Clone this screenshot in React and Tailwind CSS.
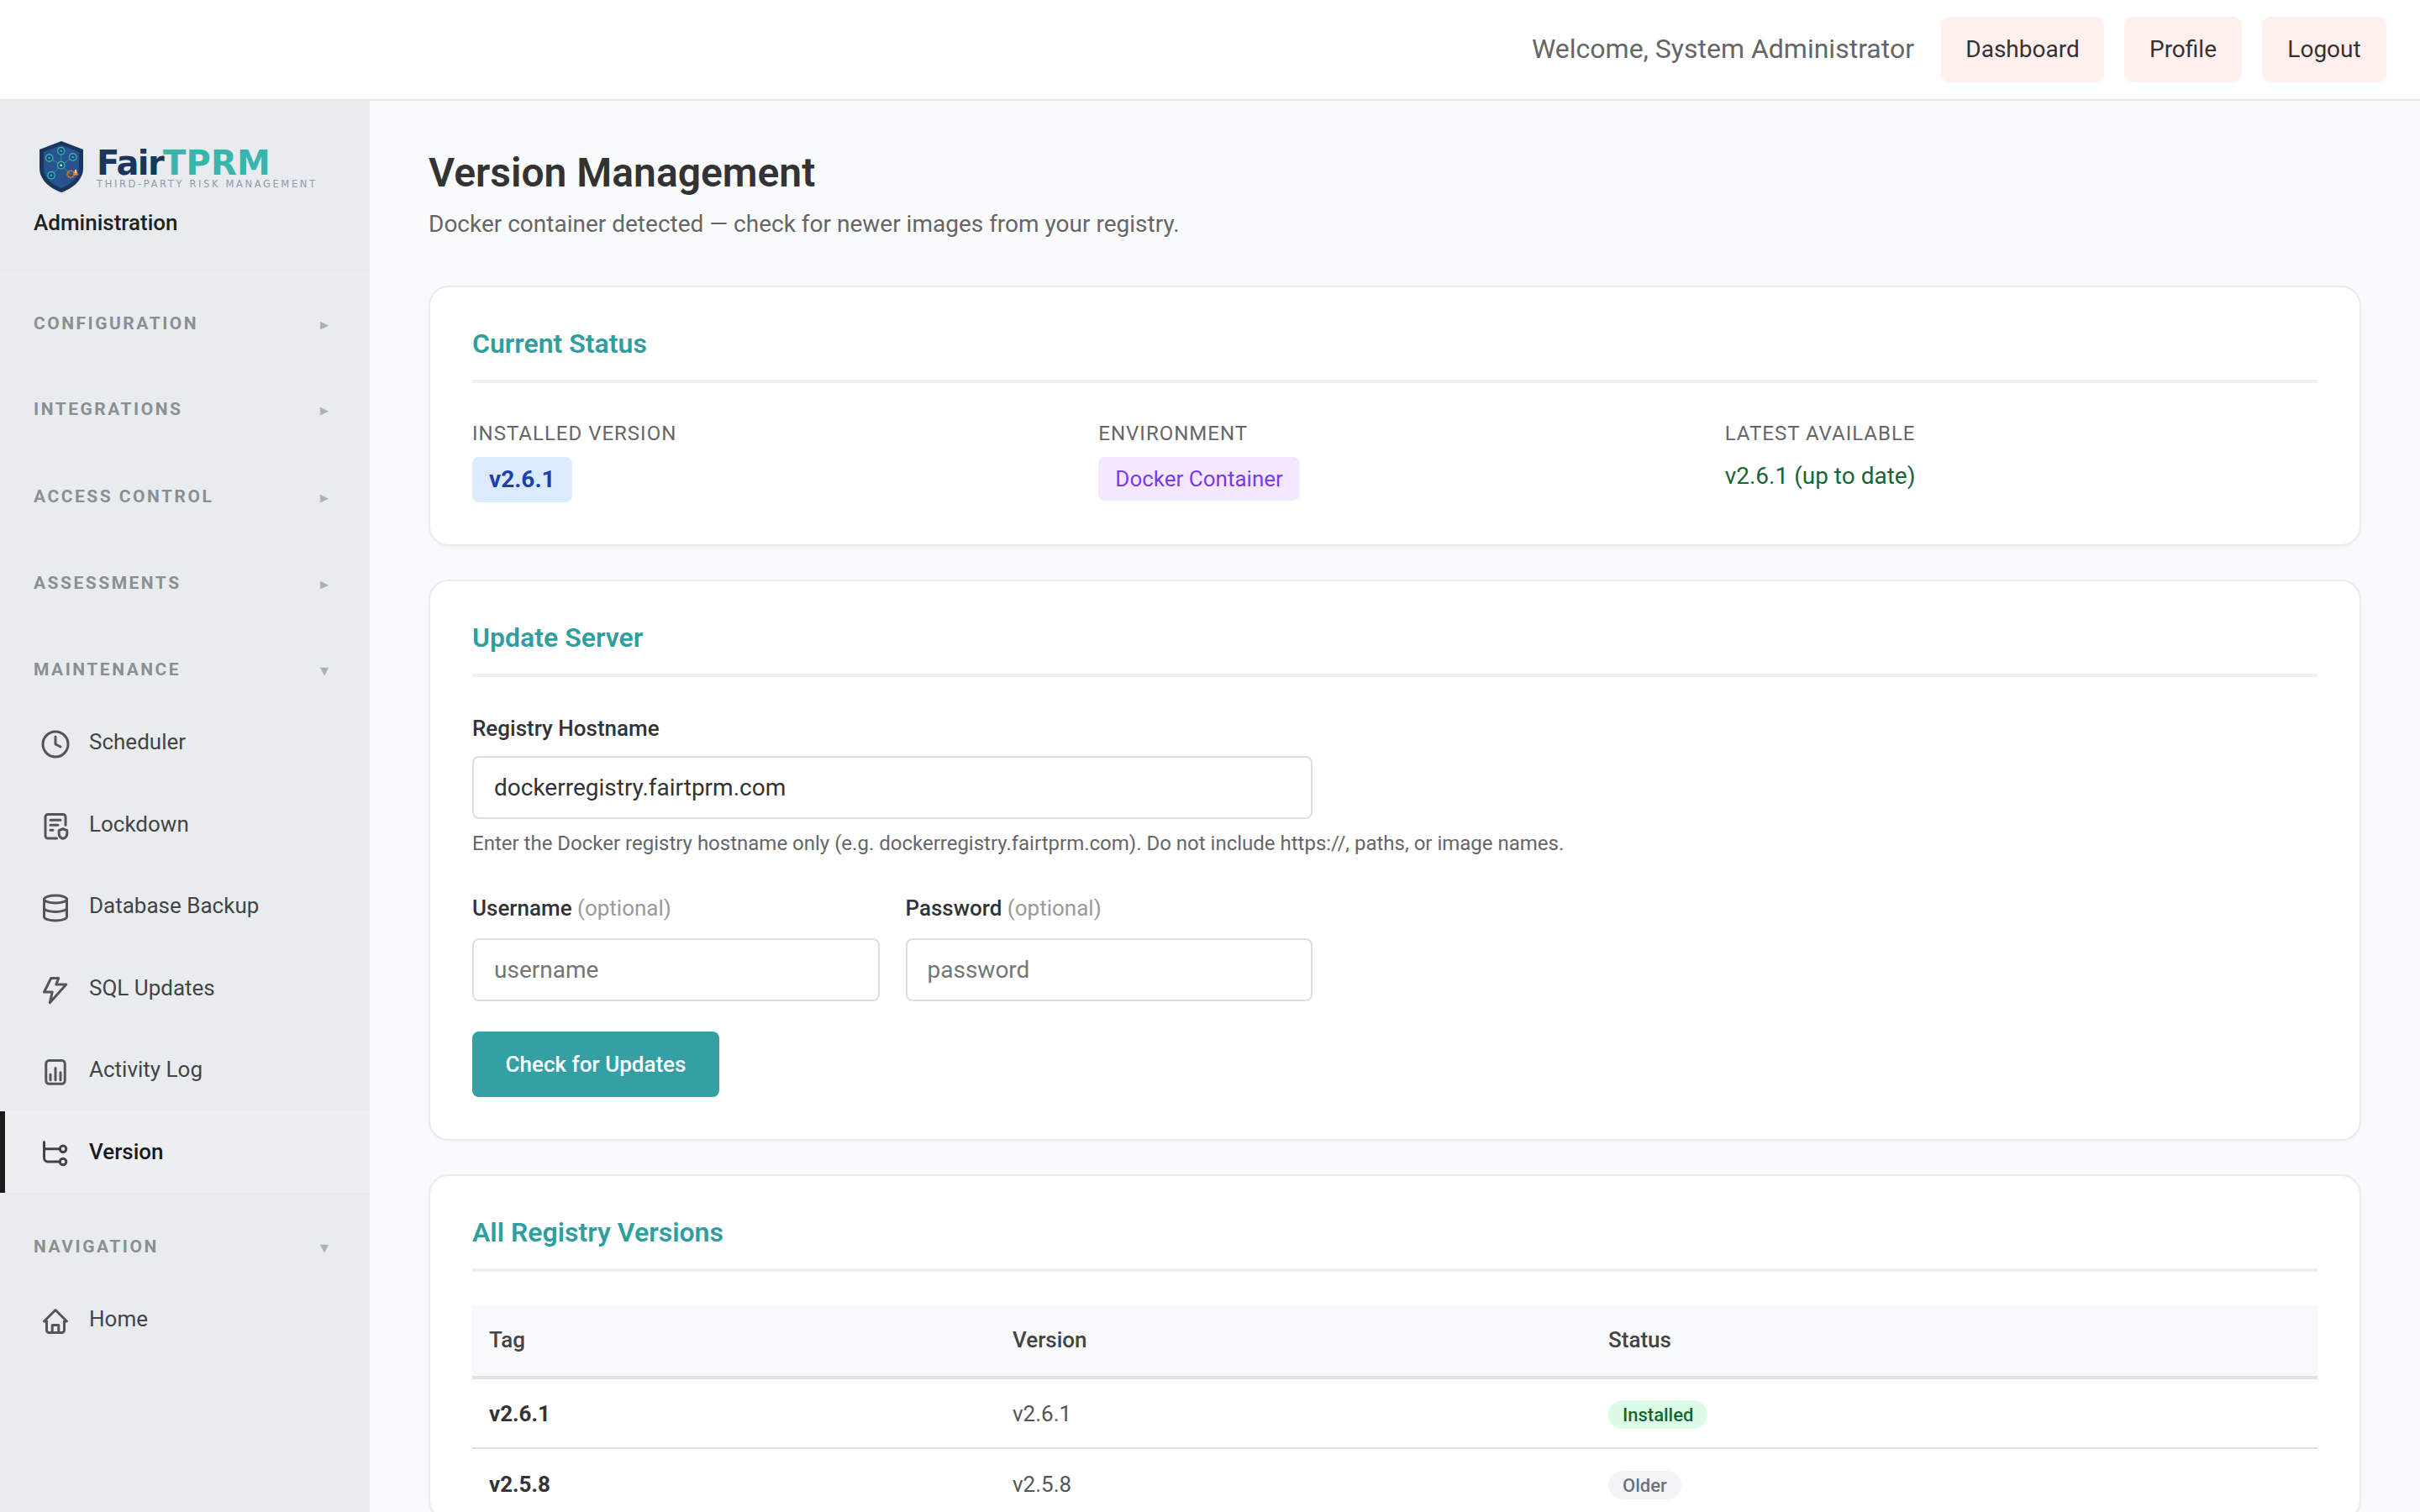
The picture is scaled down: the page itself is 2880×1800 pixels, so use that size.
import React from "react";

const Ic = ({ children }) => (
  <svg viewBox="0 0 24 24" className="w-9 h-9 shrink-0" fill="none" stroke="currentColor" strokeWidth="2" strokeLinecap="round" strokeLinejoin="round">
    {children}
  </svg>
);

const icons = {
  clock: (
    <>
      <circle cx="12" cy="12" r="10" />
      <path d="M12 6v6l4 2" />
    </>
  ),
  lock: (
    <>
      <path d="M20 11.5V5a2 2 0 0 0-2-2H6a2 2 0 0 0-2 2v15a2 2 0 0 0 2 2h7" />
      <path d="M8 7.5h8M8 11.5h6M8 15.5h2" />
      <path d="M18 14.5l3.2 1.2v2.8c0 2-1.5 3.2-3.2 3.8c-1.7-.6-3.2-1.8-3.2-3.8v-2.8z" />
    </>
  ),
  db: (
    <>
      <ellipse cx="12" cy="5" rx="9" ry="3" />
      <path d="M3 5V19A9 3 0 0 0 21 19V5" />
      <path d="M3 12A9 3 0 0 0 21 12" />
    </>
  ),
  bolt: <path d="M8.5 3H14.5L12.5 8H20.5L7.5 22.5L9.5 14H3Z" />,
  chart: (
    <>
      <rect x="4.5" y="3" width="15" height="18.5" rx="2.5" />
      <path d="M8 18.5v-4.5M12 18.5V9M16 18.5v-6" />
    </>
  ),
  version: (
    <>
      <path d="M3 3V15.7a3 3 0 0 0 3 3h9.5M3 8.5h12.5" />
      <circle cx="18" cy="8.5" r="2.5" />
      <circle cx="18" cy="18.7" r="2.5" />
    </>
  ),
  home: (
    <>
      <path d="M5 12H3l9-9 9 9h-2" />
      <path d="M5 12v7a2 2 0 0 0 2 2h10a2 2 0 0 0 2-2v-7" />
      <path d="M9.5 21v-6h5v6" />
    </>
  ),
};

const Logo = () => (
  <div className="flex items-start h-[66px] ml-[7px]">
    <svg viewBox="0 0 52 61" className="w-[52px] h-[61px] mt-[3px] shrink-0">
      <path d="M26 0L52 10V32C52 47 38 57 26 61C14 57 0 47 0 32V10Z" fill="#1a365d" />
      <path d="M26 5L47 13V32C47 44 36 52 26 56C16 52 5 44 5 32V13Z" fill="#28538f" />
      <g stroke="#2f8f9f" strokeWidth="1" fill="none">
        <path d="M25.7 11.7V28.7M11.7 20L25.7 28.7L39.7 19M14 40.7L25.7 28.7L37.3 39.3" />
      </g>
      {[[25.7, 11.7], [11.7, 20], [39.7, 19], [14, 40.7], [25.7, 28.7]].map(([x, y], i) => (
        <g key={i}>
          <circle cx={x} cy={y} r="4.2" fill="#1f4a80" stroke="#2fb5ab" strokeWidth="1.4" />
          <circle cx={x} cy={y} r="1.3" fill={i === 4 ? "#fff" : "#2fb5ab"} />
        </g>
      ))}
      <circle cx="37.3" cy="39.3" r="4" fill="none" stroke="#e8702a" strokeWidth="2" strokeDasharray="2 0.6" />
      <path d="M43 33.5L46.5 40.5H39.5Z" fill="#f08030" />
      <path d="M43 34V38" stroke="#fff" strokeWidth="1.3" />
    </svg>
    <div className="ml-[16px] font-['DejaVu_Sans',sans-serif]">
      <div className="h-[42px] mt-[8px] text-[40px] leading-[42px] font-bold whitespace-nowrap">
        <span className="text-[#1a365d] tracking-[-1.6px]">Fair</span>
        <span className="text-[#38b6ac] tracking-[0.2px]">TPRM</span>
      </div>
      <div className="text-[11.5px] leading-[14px] -mt-[3px] ml-[0px] tracking-[2.62px] text-[#8f99ae] whitespace-nowrap">THIRD-PARTY RISK MANAGEMENT</div>
    </div>
  </div>
);

const Section = ({ title, open, children, after }) => (
  <div className={after}>
    <div className="h-[70px] pl-[40px] pr-[49px] flex items-center justify-between">
      <span className="text-[21px] font-bold tracking-[2.5px] text-[#8a8f94]">{title}</span>
      <span className="text-[13px] leading-none text-[#adb1b5] font-['DejaVu_Sans',sans-serif]">{open ? "▼" : "▶"}</span>
    </div>
    {children && <div className="mt-[2px]">{children}</div>}
  </div>
);

const Item = ({ icon, label, active }) => (
  <div className={"h-[97.5px] flex items-center gap-[22px] text-[26px] " + (active ? "bg-[#edeff3] border-l-[6px] border-[#1a1a1a] pl-[42px] text-[#1a1a1a] font-medium" : "pl-[48px] text-[#444]")}>
    <span className={"mt-[4px] " + (active ? "text-[#444]" : "text-[#555]")}>
      <Ic>{icons[icon]}</Ic>
    </span>
    <span>{label}</span>
  </div>
);

const Card = ({ title, children, pb = "pb-[50px]" }) => (
  <section className={"bg-white border-2 border-[#e9ebee] rounded-[24px] shadow-[0_2px_4px_rgba(0,0,0,0.03)] px-[50px] pt-[44px] " + pb}>
    <h3 className="h-[46px] leading-[46px] text-[32px] font-semibold text-[#2f9e9e]">{title}</h3>
    <div className="mt-[20px] h-[4px] bg-[#f0f0f0]" />
    {children}
  </section>
);

const Label = ({ children }) => <label className="block h-[36px] leading-[36px] text-[26px] font-medium text-[#333]">{children}</label>;
const Opt = () => <span className="font-normal text-[#999]"> (optional)</span>;
const inputCls = "block w-full h-[75px] box-border border-2 border-[#dedede] rounded-[8px] bg-white px-[24px] text-[28px] text-[#333] placeholder:text-[#757575] outline-none";

const Th = ({ children, w }) => <th className={"text-left font-medium text-[26px] text-[#444] pl-[20px] pb-[2px] h-[86px] " + w}>{children}</th>;

export default function App() {
  return (
    <div className="w-[2880px] h-[1800px] overflow-hidden bg-[#f9fafb] font-['Roboto',sans-serif] flex flex-col">
      <header className="h-[120px] shrink-0 bg-white border-b-2 border-[#e5e7ea] flex items-center justify-end pr-[40px] pb-[1px]">
        <span className="text-[32px] text-[#666] mr-[32px] -mt-[2px]">Welcome, System Administrator</span>
        <nav className="flex gap-[24px]">
          {[["Dashboard", "w-[194px]"], ["Profile", "w-[140px]"], ["Logout", "w-[148px]"]].map(([t, w]) => (
            <a key={t} className={"h-[78px] flex items-center justify-center rounded-[10px] bg-[#fff0ee] text-[28px] text-[#333] " + w}>{t}</a>
          ))}
        </nav>
      </header>
      <div className="flex flex-1 min-h-0">
        <aside className="w-[440px] shrink-0 bg-[#e9ecef]">
          <div className="h-[208px] px-[40px] pt-[45px] border-b-2 border-[#ebedf0]">
            <Logo />
            <div className="mt-[17px] h-[34px] leading-[34px] text-[26px] font-medium text-[#222]">Administration</div>
          </div>
          <div className="pt-[23px]">
            <Section title="CONFIGURATION" after="mb-[32px]" />
            <Section title="INTEGRATIONS" after="mb-[34px]" />
            <Section title="ACCESS CONTROL" after="mb-[33px]" />
            <Section title="ASSESSMENTS" after="mb-[33px]" />
            <Section title="MAINTENANCE" open after="mb-[30px]">
              <Item icon="clock" label="Scheduler" />
              <Item icon="lock" label="Lockdown" />
              <Item icon="db" label="Database Backup" />
              <Item icon="bolt" label="SQL Updates" />
              <Item icon="chart" label="Activity Log" />
              <Item icon="version" label="Version" active />
            </Section>
            <Section title="NAVIGATION" open>
              <Item icon="home" label="Home" />
            </Section>
          </div>
        </aside>
        <main className="flex-1 min-w-0 px-[70px] pt-[56px]">
          <h1 className="h-[60px] leading-[60px] text-[48px] font-semibold text-[#333]">Version Management</h1>
          <p className="mt-[11px] h-[40px] leading-[40px] text-[28px] text-[#666] mb-[53px]">Docker container detected — check for newer images from your registry.</p>

          <div className="flex flex-col gap-[40px]">
            <Card title="Current Status">
              <div className="mt-[44px] grid grid-cols-3 gap-[40px]">
                <div>
                  <div className="h-[32px] leading-[32px] text-[24px] tracking-[1px] text-[#666]">INSTALLED VERSION</div>
                  <span className="mt-[12px] inline-flex items-center h-[54px] px-[20px] rounded-[8px] bg-[#dbeafe] text-[#1e40af] text-[28px] font-bold">v2.6.1</span>
                </div>
                <div>
                  <div className="h-[32px] leading-[32px] text-[24px] tracking-[1px] text-[#666]">ENVIRONMENT</div>
                  <span className="mt-[12px] inline-flex items-center h-[52px] px-[20px] rounded-[8px] bg-[#f3e8ff] text-[#7c3aed] text-[26px]">Docker Container</span>
                </div>
                <div>
                  <div className="h-[32px] leading-[32px] text-[24px] tracking-[1px] text-[#666]">LATEST AVAILABLE</div>
                  <div className="mt-[13px] h-[44px] leading-[44px] text-[28px] text-[#166534]">v2.6.1 (up to date)</div>
                </div>
              </div>
            </Card>

            <Card title="Update Server">
              <div className="mt-[43px] w-[1000px]">
                <Label>Registry Hostname</Label>
                <input className={"mt-[15px] " + inputCls} defaultValue="dockerregistry.fairtprm.com" />
                <div className="mt-[13px] h-[32px] leading-[32px] text-[24px] text-[#666] whitespace-nowrap">Enter the Docker registry hostname only (e.g. dockerregistry.fairtprm.com). Do not include https://, paths, or image names.</div>
                <div className="mt-[43px] grid grid-cols-2 gap-[31px]">
                  <div>
                    <Label>Username<Opt /></Label>
                    <input className={"mt-[18px] " + inputCls} placeholder="username" />
                  </div>
                  <div>
                    <Label>Password<Opt /></Label>
                    <input className={"mt-[18px] " + inputCls} placeholder="password" />
                  </div>
                </div>
                <button className="mt-[36px] w-[294px] h-[78px] rounded-[8px] bg-[#34a0a4] text-white text-[26px] font-medium">Check for Updates</button>
              </div>
            </Card>

            <Card title="All Registry Versions" pb="pb-[0px]">
              <table className="mt-[40px] w-full border-collapse table-fixed">
                <thead>
                  <tr className="bg-[#f8f9fa] border-b-4 border-[#dee2e6]">
                    <Th w="w-[623px]">Tag</Th>
                    <Th w="w-[709px]">Version</Th>
                    <Th>Status</Th>
                  </tr>
                </thead>
                <tbody>
                  <tr className="border-b-2 border-[#e0e3e6] h-[84px] text-[26px]">
                    <td className="pl-[20px] pt-[1px] font-bold text-[#333]">v2.6.1</td>
                    <td className="pl-[20px] pt-[1px] text-[#555]">v2.6.1</td>
                    <td className="pl-[20px] pt-[1px]"><span className="inline-flex items-center h-[34px] px-[17px] rounded-full bg-[#dcfce7] text-[#166534] text-[22px] font-medium">Installed</span></td>
                  </tr>
                  <tr className="h-[84px] text-[26px]">
                    <td className="pl-[20px] pt-[1px] font-bold text-[#333]">v2.5.8</td>
                    <td className="pl-[20px] pt-[1px] text-[#555]">v2.5.8</td>
                    <td className="pl-[20px] pt-[1px]"><span className="inline-flex items-center h-[34px] px-[17px] rounded-full bg-[#f3f4f6] text-[#6b7280] text-[22px] font-medium">Older</span></td>
                  </tr>
                </tbody>
              </table>
            </Card>
          </div>
        </main>
      </div>
    </div>
  );
}
